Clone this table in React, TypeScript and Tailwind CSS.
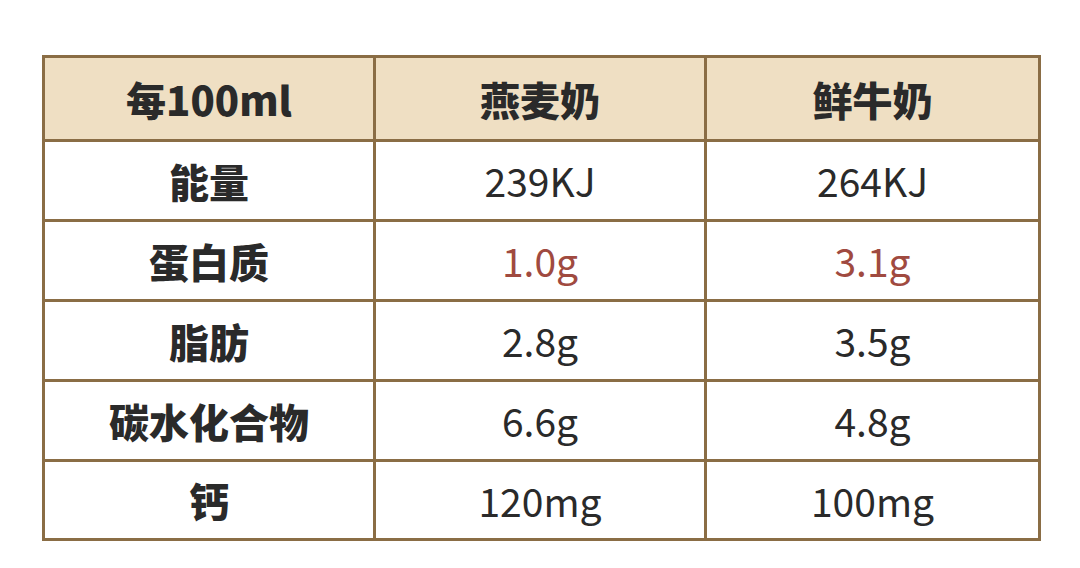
const rows = [
  { name: "能量", oat: "239KJ", milk: "264KJ", red: false },
  { name: "蛋白质", oat: "1.0g", milk: "3.1g", red: true },
  { name: "脂肪", oat: "2.8g", milk: "3.5g", red: false },
  { name: "碳水化合物", oat: "6.6g", milk: "4.8g", red: false },
  { name: "钙", oat: "120mg", milk: "100mg", red: false },
];

export default function App() {
  return (
    <div
      className="w-[1080px] h-[568px] bg-white pt-[55px] pl-[42px]"
      style={{ fontFamily: '"Noto Sans CJK SC", "Noto Sans", sans-serif' }}
    >
      <div className="w-[999px] border-[3px] border-[#8a6d45] text-[#2a2a2a]">
        <div className="grid grid-cols-3 h-[84px] bg-[#efdfc3] border-b-[3px] border-[#8a6d45] font-black text-[40px]">
          <div className="flex items-center justify-center border-r-[3px] border-[#8a6d45]">每100ml</div>
          <div className="flex items-center justify-center border-r-[3px] border-[#8a6d45]">燕麦奶</div>
          <div className="flex items-center justify-center">鲜牛奶</div>
        </div>
        {rows.map((r, i) => (
          <div
            key={r.name}
            className={`grid grid-cols-3 ${i < rows.length - 1 ? "h-[80px] border-b-[3px] border-[#8a6d45]" : "h-[76px]"}`}
          >
            <div className="flex items-center justify-center border-r-[3px] border-[#8a6d45] font-black text-[40px]">{r.name}</div>
            <div className={`flex items-center justify-center border-r-[3px] border-[#8a6d45] text-[39px] ${r.red ? "text-[#a04a40]" : ""}`}>{r.oat}</div>
            <div className={`flex items-center justify-center text-[39px] ${r.red ? "text-[#a04a40]" : ""}`}>{r.milk}</div>
          </div>
        ))}
      </div>
    </div>
  );
}
